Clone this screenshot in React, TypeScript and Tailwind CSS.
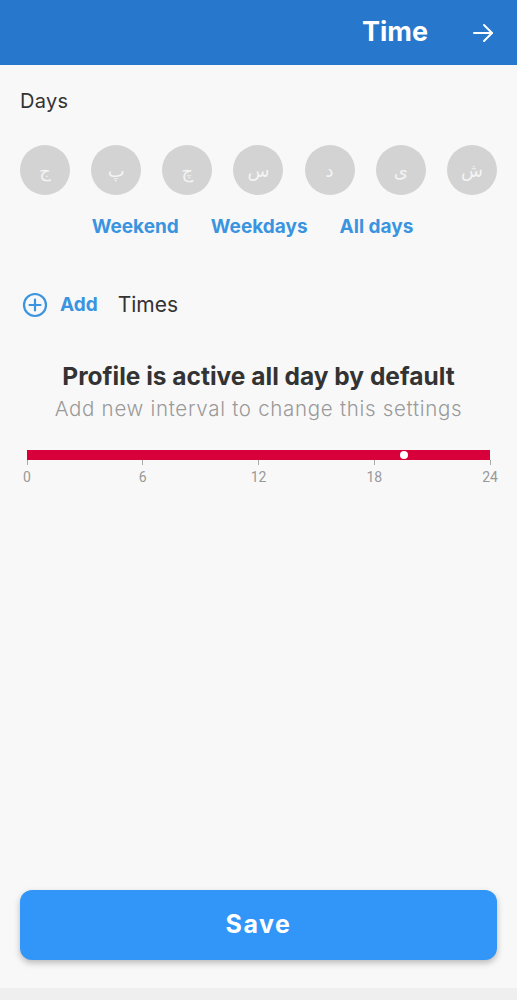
import React from "react";

const days = ["ج", "پ", "چ", "س", "د", "ی", "ش"];
const ticks = [0, 6, 12, 18, 24];

const App = () => {
  return (
    <div
      className="w-[517px] h-[1000px] flex flex-col bg-[#f8f8f8] text-[#333]"
      style={{ fontFamily: "Inter, 'Open Sans', sans-serif" }}
    >
      {/* HEADER */}
      <div className="h-[65px] bg-[#2777cc] flex items-center justify-end pr-[22px] shrink-0">
        <span className="text-white text-[27px] font-bold mr-[43px]">Time</span>
        <svg width="24" height="24" viewBox="0 0 24 24" fill="none" stroke="white" strokeWidth="2" strokeLinecap="round" strokeLinejoin="round">
          <path d="M3 12h18" />
          <path d="M13 4l8 8-8 8" />
        </svg>
      </div>

      {/* DAYS */}
      <div className="px-5 pt-[23px]">
        <div className="text-[20px] text-[#333] leading-[26px] tracking-[0.3px]">Days</div>
        <div className="flex justify-between mt-[31px]">
          {days.map((d) => (
            <div
              key={d}
              className="w-[50px] h-[50px] rounded-full bg-[#d3d3d3] flex items-center justify-center text-[#f4f4f4] text-[18px]"
              style={{ fontFamily: "'DejaVu Sans', 'Noto Sans', sans-serif" }}
            >
              {d}
            </div>
          ))}
        </div>
        <div className="flex justify-center gap-[32px] mt-[20px] text-[#3a94df] text-[19px] font-bold leading-[24px] pr-[12px]">
          <span>Weekend</span>
          <span>Weekdays</span>
          <span>All days</span>
        </div>
      </div>

      {/* ADD TIMES */}
      <div className="flex items-center px-[22px] mt-[50px]">
        <svg width="26" height="26" viewBox="0 0 26 26" fill="none" stroke="#3a94df" strokeWidth="2.2" strokeLinecap="round">
          <circle cx="13" cy="13" r="11" />
          <path d="M13 7.5v11M7.5 13h11" />
        </svg>
        <span className="ml-[12px] text-[19px] font-bold text-[#3a94df]">Add</span>
        <span className="ml-[20px] text-[21px] text-[#333]">Times</span>
      </div>

      {/* INFO */}
      <div className="flex flex-col items-center mt-[40px]">
        <div className="text-[24.5px] font-bold text-[#333] leading-[30px]">Profile is active all day by default</div>
        <div className="text-[20.5px] text-[#9a9a9a] leading-[26px] mt-[5px] font-light tracking-[0.7px]">
          Add new interval to change this settings
        </div>
      </div>

      {/* TIMELINE */}
      <div className="px-[27px] mt-[28px]">
        <div className="relative h-[10px] bg-[#d8003b]">
          <div className="absolute left-[373px] top-[1px] w-[8px] h-[8px] rounded-full bg-white" />
        </div>
        <div className="flex justify-between">
          {ticks.map((t) => (
            <div key={t} className="w-0 flex flex-col items-center">
              <div className="w-[1px] h-[5px] bg-[#aaa]" />
              <span
                className="text-[14px] text-[#999] leading-[16px] mt-[4px]"
                style={{ fontFamily: "Roboto, sans-serif" }}
              >
                {t}
              </span>
            </div>
          ))}
        </div>
      </div>

      <div className="flex-1" />

      {/* SAVE */}
      <div className="px-5 pb-[28px]">
        <button className="w-full h-[70px] rounded-[12px] bg-[#3196f7] text-white text-[25px] font-bold tracking-[1.5px] shadow-[0_3px_6px_rgba(0,0,0,0.25)]">
          Save
        </button>
      </div>
      <div className="h-[12px] bg-[#efefef] shrink-0" />
    </div>
  );
};

export default App;
